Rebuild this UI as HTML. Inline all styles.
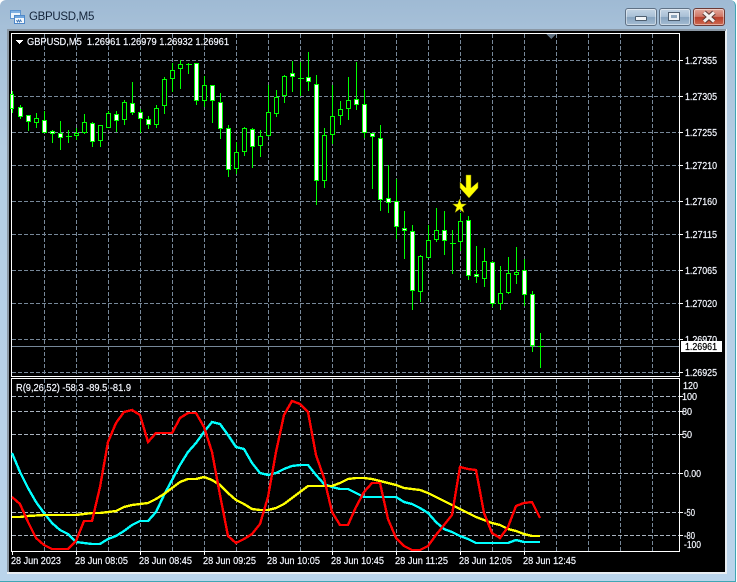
<!DOCTYPE html>
<html><head><meta charset="utf-8"><title>GBPUSD,M5</title>
<style>
html,body{margin:0;padding:0;width:737px;height:582px;overflow:hidden;background:#fff}
.a{position:absolute}
svg text{font-family:"Liberation Sans",sans-serif;font-size:10px;fill:#f4f7ff;stroke:#f4f7ff;stroke-width:.2}
.b{position:absolute;top:8px;height:16px;border:1px solid #5f7185;border-radius:3px;box-shadow:inset 0 0 0 1px rgba(255,255,255,.45)}
</style></head><body>
<div class="a" style="left:0;top:0;width:735px;height:581px;border-radius:6px 6px 0 0;background:linear-gradient(#9fbad4 0,#a6c0d8 28px,#b4cde3 150px,#bad4eb 582px);border-right:1px solid #3fa6b4;border-bottom:1px solid #3fa6b4"></div>
<div class="a" style="left:7px;top:29px;width:720px;height:545px;background:#e8edf2;"></div>
<div class="a" style="left:7px;top:29px;width:719px;height:2px;background:#8b98a5"></div>
<div class="a" style="left:7px;top:29px;width:2px;height:543px;background:#8b98a5"></div>
<div class="a" style="left:9px;top:31px;width:716px;height:541px;background:#000"></div>

<!-- title icon -->
<svg class="a" style="left:9px;top:9px" width="16" height="16" viewBox="0 0 16 16" shape-rendering="crispEdges">
<rect x="1.500" y="1.500" width="10" height="8" fill="#eef5fc" stroke="#5d94cf"/><rect x="2" y="2" width="9" height="2" fill="#7fb0e2"/>
<rect x="5.500" y="6.500" width="10" height="8" fill="#f4f8fd" stroke="#4f88c8"/><rect x="6" y="7" width="9" height="2" fill="#6fa6df"/>
<path d="M7.500 11l1 2 1-2 1 2 1-2 1 2" fill="none" stroke="#3f77b5"/></svg>
<div class="a" style="left:29px;top:9px;font:11.5px/16px 'Liberation Sans',sans-serif;color:#14243a;letter-spacing:-.3px">GBPUSD,M5</div>

<!-- caption buttons -->
<div class="b" style="left:625px;width:30px;background:linear-gradient(#c3d4e4 0,#a9c0d6 48%,#86a3bf 52%,#a5bdd3 100%)"></div>
<div class="a" style="left:635px;top:16px;width:10px;height:3px;background:#f2f5f8;border:1px solid #4f5f70;border-radius:1px"></div>
<div class="b" style="left:659px;width:30px;background:linear-gradient(#c3d4e4 0,#a9c0d6 48%,#86a3bf 52%,#a5bdd3 100%)"></div>
<div class="a" style="left:669px;top:13px;width:6px;height:3px;border:2px solid #eef2f6;outline:1px solid #4f5f70;background:#8ea6bd"></div>
<div class="b" style="left:693px;width:30px;border-color:#6b3a36;background:linear-gradient(#e2a79b 0,#cf7564 48%,#b83e2a 52%,#cf6a52 100%)"></div>
<svg class="a" style="left:700px;top:10px" width="18" height="14" viewBox="0 0 18 14"><path d="M4 2.500L14 11.500M14 2.500L4 11.500" stroke="#5b3a36" stroke-width="5"/><path d="M4 2.500L14 11.500M14 2.500L4 11.500" stroke="#f4f0ee" stroke-width="3"/></svg>

<svg class="a" style="left:0;top:0" width="737" height="582" viewBox="0 0 737 582">
<g shape-rendering="crispEdges" fill="none">
<!-- main vertical grid -->
<path stroke="#778899" stroke-dasharray="4 2" d="M44.500 34V376M76.500 34V376M108.500 34V376M140.500 34V376M172.500 34V376M204.500 34V376M236.500 34V376M268.500 34V376M300.500 34V376M332.500 34V376M364.500 34V376M396.500 34V376M428.500 34V376M460.500 34V376M492.500 34V376M524.500 34V376M556.500 34V376M588.500 34V376M620.500 34V376M652.500 34V376"/>
<path stroke="#778899" stroke-dasharray="4 2" d="M12 60.500H679M12 96.500H679M12 132.500H679M12 165.500H679M12 201.500H679M12 234.500H679M12 270.500H679M12 303.500H679M12 339.500H679M12 372.500H679"/>
<path stroke="#778899" d="M12 346.500H679"/>
<!-- sub vertical grid -->
<path stroke="#778899" stroke-dasharray="4 2" d="M44.500 379V551M76.500 379V551M108.500 379V551M140.500 379V551M172.500 379V551M204.500 379V551M236.500 379V551M268.500 379V551M300.500 379V551M332.500 379V551M364.500 379V551M396.500 379V551M428.500 379V551M460.500 379V551M492.500 379V551M524.500 379V551M556.500 379V551M588.500 379V551M620.500 379V551M652.500 379V551"/>
<path stroke="#a9b3bf" stroke-dasharray="4 2" d="M12 396.500H679M12 411.500H679M12 434.500H679M12 473.500H679M12 512.500H679M12 535.500H679"/>
<!-- frames -->
<path stroke="#fff" d="M11.500 33.500H679.500V376.500H11.500ZM11.500 378.500H679.500V551.500H11.500Z"/>
<path stroke="#fff" d="M680 60.500h3M680 96.500h3M680 132.500h3M680 165.500h3M680 201.500h3M680 234.500h3M680 270.500h3M680 303.500h3M680 339.500h3M680 372.500h3M680 396.500h3M680 411.500h3M680 434.500h3M680 473.500h3M680 512.500h3M680 535.500h3M12.500 552v3M76.500 552v3M140.500 552v3M204.500 552v3M268.500 552v3M332.500 552v3M396.500 552v3M460.500 552v3M524.500 552v3"/>
<path fill="#5f7080" d="M546 34h10l-5 5z"/>
<path fill="#fff" d="M15 40h8v1h-1v1h-1v1h-1v1h-1v-1h-1v-1h-1v-1h-1v-1z"/>
<!-- wicks -->
<path stroke="#00ff00" d="M12.500 91V113M20.500 105V119M28.500 115V131M36.500 113V128M44.500 111V133M52.500 130V143M60.500 121V150M68.500 130V143M76.500 128V140M84.500 114V134M92.500 122V147M100.500 125V147M108.500 111V128M116.500 111V132M124.500 100V125M132.500 82V115M140.500 109V133M148.500 116V129M156.500 105V128M164.500 77V114M172.500 63V92M180.500 60V89M188.500 63V74M196.500 63V105M204.500 76V107M212.500 85V123M220.500 93V139M228.500 125V177M236.500 142V174M244.500 127V156M252.500 128V168M260.500 130V157M268.500 85V137M276.500 90V117M284.500 75V103M292.500 61V92M300.500 62V96M308.500 52V91M316.500 75V205M324.500 128V188M332.500 85V144M340.500 101V125M348.500 77V120M356.500 62V110M364.500 90V138M372.500 133V189M380.500 125V211M388.500 165V213M396.500 179V239M404.500 211V259M412.500 225V310M420.500 255V302M428.500 225V258M436.500 208V242M444.500 211V255M452.500 230V274M460.500 213V251M468.500 216V280M476.500 246V283M484.500 248V287M492.500 261V307M500.500 266V310M508.500 257V294M516.500 247V284M524.500 259V306M532.500 291V352M540.500 333V368"/>
<!-- dojis -->
<path stroke="#00ff00" d="M66 136.500h6M186 64.500h6M298 78.500h6M450 243.500h6M538 346.500h6"/>
<!-- filled -->
<g stroke="#00ff00" fill="#fff">
<rect x="10.500" y="94.500" width="3" height="14"/>
<rect x="18.500" y="107.500" width="4" height="9"/><rect x="26.500" y="115.500" width="4" height="6"/><rect x="42.500" y="120.500" width="4" height="12"/><rect x="50.500" y="131.500" width="4" height="2"/><rect x="58.500" y="133.500" width="4" height="4"/><rect x="90.500" y="123.500" width="4" height="18"/><rect x="114.500" y="114.500" width="4" height="6"/><rect x="130.500" y="103.500" width="4" height="9"/><rect x="138.500" y="112.500" width="4" height="6"/><rect x="146.500" y="119.500" width="4" height="5"/><rect x="194.500" y="63.500" width="4" height="37"/><rect x="210.500" y="85.500" width="4" height="15"/><rect x="218.500" y="102.500" width="4" height="26"/><rect x="226.500" y="128.500" width="4" height="41"/><rect x="250.500" y="129.500" width="4" height="17"/><rect x="290.500" y="73.500" width="4" height="3"/><rect x="306.500" y="77.500" width="4" height="4"/><rect x="314.500" y="84.500" width="4" height="96"/><rect x="354.500" y="99.500" width="4" height="5"/><rect x="362.500" y="104.500" width="4" height="28"/><rect x="370.500" y="133.500" width="4" height="3"/><rect x="378.500" y="138.500" width="4" height="61"/><rect x="386.500" y="198.500" width="4" height="4"/><rect x="394.500" y="201.500" width="4" height="25"/><rect x="402.500" y="228.500" width="4" height="2"/><rect x="410.500" y="231.500" width="4" height="59"/><rect x="442.500" y="230.500" width="4" height="10"/><rect x="466.500" y="220.500" width="4" height="55"/><rect x="474.500" y="274.500" width="4" height="2"/><rect x="490.500" y="262.500" width="4" height="41"/><rect x="522.500" y="270.500" width="4" height="24"/><rect x="530.500" y="294.500" width="4" height="51"/>
</g>
<!-- hollow -->
<g stroke="#00ff00" fill="#000">
<rect x="34.500" y="118.500" width="4" height="4"/><rect x="74.500" y="133.500" width="4" height="2"/><rect x="82.500" y="122.500" width="4" height="10"/><rect x="98.500" y="125.500" width="4" height="15"/><rect x="106.500" y="113.500" width="4" height="14"/><rect x="122.500" y="102.500" width="4" height="17"/><rect x="154.500" y="108.500" width="4" height="16"/><rect x="162.500" y="79.500" width="4" height="26"/><rect x="170.500" y="70.500" width="4" height="8"/><rect x="178.500" y="64.500" width="4" height="4"/><rect x="202.500" y="85.500" width="4" height="15"/><rect x="234.500" y="152.500" width="4" height="16"/><rect x="242.500" y="128.500" width="4" height="23"/><rect x="258.500" y="136.500" width="4" height="9"/><rect x="266.500" y="112.500" width="4" height="23"/><rect x="274.500" y="97.500" width="4" height="16"/><rect x="282.500" y="76.500" width="4" height="19"/><rect x="322.500" y="135.500" width="4" height="45"/><rect x="330.500" y="116.500" width="4" height="18"/><rect x="338.500" y="109.500" width="4" height="6"/><rect x="346.500" y="100.500" width="4" height="8"/><rect x="418.500" y="256.500" width="4" height="35"/><rect x="426.500" y="240.500" width="4" height="17"/><rect x="434.500" y="230.500" width="4" height="9"/><rect x="458.500" y="221.500" width="4" height="20"/><rect x="482.500" y="261.500" width="4" height="17"/><rect x="498.500" y="293.500" width="4" height="10"/><rect x="506.500" y="273.500" width="4" height="19"/><rect x="514.500" y="272.500" width="4" height="2"/>
</g>
<!-- indicator lines -->
<g stroke-width="2.400">
<path stroke="#00ffff" d="M12 453L20 472L28 488L36 502L44 513L52 523L60 530L68 534L76 542L84 543L92 544L100 544L108 539L116 536L124 531L132 525L140 521L148 521L156 512L164 495L172 480L180 465L188 452L196 443L204 432L212 422L220 424L228 435L236 447L244 449L252 463L260 473L268 475L276 473L284 469L292 466L300 465L308 465L316 475L324 484L332 487L340 489L348 489L356 493L364 497L372 497L380 497L388 497L396 497L404 502L412 504L420 508L428 513L436 522L444 529L452 532L460 536L468 539L476 543L484 543L492 543L500 543L508 543L516 540L524 542L532 542L540 542"/>
<path stroke="#ffff00" d="M12 517L20 517L28 516L44 515L76 515L84 514L92 513L100 513L108 512L116 511L124 507L132 505L140 504L148 503L156 499L164 494L172 488L180 482L188 479L196 479L204 477L212 480L220 485L228 493L236 500L244 504L252 509L260 510L268 510L276 508L284 504L292 498L300 492L308 486L316 486L324 486L332 486L340 483L348 479L356 478L364 478L372 479L380 481L388 483L396 485L404 488L412 489L420 490L428 493L436 497L444 501L452 505L460 509L468 513L476 517L484 520L492 523L500 525L508 529L516 531L524 534L532 536L540 536"/>
<path stroke="#ff0000" d="M12 497L20 504L28 522L36 538L44 545L52 549L60 549L68 549L76 541L84 521L92 521L100 487L108 442L116 423L124 412L132 410L140 415L148 442L156 433L164 433L172 433L180 418L188 413L196 413L204 427L212 452L220 495L228 536L236 543L244 539L252 534L260 524L268 497L276 452L284 415L292 401L300 404L308 412L316 455L324 478L332 512L340 525L348 525L356 507L364 492L372 483L380 483L388 519L396 538L404 546L412 550L420 550L428 546L436 535L444 525L452 515L460 467L468 469L476 470L484 513L492 533L500 538L508 527L516 506L524 503L532 502L540 518"/>
</g>
<!-- arrow + star -->
<path fill="#ffff00" stroke="#7a7a00" stroke-width=".5" d="M466 175H471V188L478 182V188L469 198L460 188V182L466 188Z" shape-rendering="auto"/>
<path fill="#ffff00" stroke="#7a7a00" stroke-width=".5" d="M459.500 199L461.300 204H466.500L462.300 207.200L464 212.500L459.500 209.300L455 212.500L456.700 207.200L452.500 204H457.700Z" shape-rendering="auto"/>
</g>
<text x="27" y="45" textLength="202" lengthAdjust="spacingAndGlyphs" xml:space="preserve">GBPUSD,M5  1.26961 1.26979 1.26932 1.26961</text>
<text x="16" y="391" textLength="115" lengthAdjust="spacingAndGlyphs">R(9,26,52) -58.3 -89.5 -81.9</text>
<g>
<text x="685" y="64" textLength="32" lengthAdjust="spacingAndGlyphs">1.27355</text>
<text x="685" y="100" textLength="32" lengthAdjust="spacingAndGlyphs">1.27305</text>
<text x="685" y="136" textLength="32" lengthAdjust="spacingAndGlyphs">1.27255</text>
<text x="685" y="169" textLength="32" lengthAdjust="spacingAndGlyphs">1.27210</text>
<text x="685" y="205" textLength="32" lengthAdjust="spacingAndGlyphs">1.27160</text>
<text x="685" y="238" textLength="32" lengthAdjust="spacingAndGlyphs">1.27115</text>
<text x="685" y="274" textLength="32" lengthAdjust="spacingAndGlyphs">1.27065</text>
<text x="685" y="307" textLength="32" lengthAdjust="spacingAndGlyphs">1.27020</text>
<text x="685" y="343" textLength="32" lengthAdjust="spacingAndGlyphs">1.26970</text>
<text x="685" y="376" textLength="32" lengthAdjust="spacingAndGlyphs">1.26925</text>
<rect x="681" y="341" width="41" height="11" fill="#fff"/>
<text x="685" y="350" textLength="32" lengthAdjust="spacingAndGlyphs" style="fill:#000;stroke:#000">1.26961</text>
<text x="683" y="389" textLength="15" lengthAdjust="spacingAndGlyphs">120</text>
<text x="682" y="400" textLength="15" lengthAdjust="spacingAndGlyphs">100</text>
<text x="682" y="415" textLength="10" lengthAdjust="spacingAndGlyphs">80</text>
<text x="682" y="438" textLength="10" lengthAdjust="spacingAndGlyphs">50</text>
<text x="684" y="477" textLength="17" lengthAdjust="spacingAndGlyphs">0.00</text>
<text x="684" y="516" textLength="11" lengthAdjust="spacingAndGlyphs">-50</text>
<text x="684" y="539" textLength="11" lengthAdjust="spacingAndGlyphs">-80</text>
<text x="684" y="548" textLength="17" lengthAdjust="spacingAndGlyphs">-100</text>
</g>
<g>
<text x="11" y="564" textLength="50" lengthAdjust="spacingAndGlyphs">28 Jun 2023</text>
<text x="75" y="564" textLength="53" lengthAdjust="spacingAndGlyphs">28 Jun 08:05</text>
<text x="139" y="564" textLength="53" lengthAdjust="spacingAndGlyphs">28 Jun 08:45</text>
<text x="203" y="564" textLength="53" lengthAdjust="spacingAndGlyphs">28 Jun 09:25</text>
<text x="267" y="564" textLength="53" lengthAdjust="spacingAndGlyphs">28 Jun 10:05</text>
<text x="331" y="564" textLength="53" lengthAdjust="spacingAndGlyphs">28 Jun 10:45</text>
<text x="395" y="564" textLength="53" lengthAdjust="spacingAndGlyphs">28 Jun 11:25</text>
<text x="459" y="564" textLength="53" lengthAdjust="spacingAndGlyphs">28 Jun 12:05</text>
<text x="523" y="564" textLength="53" lengthAdjust="spacingAndGlyphs">28 Jun 12:45</text>
</g>
</svg>
</body></html>
